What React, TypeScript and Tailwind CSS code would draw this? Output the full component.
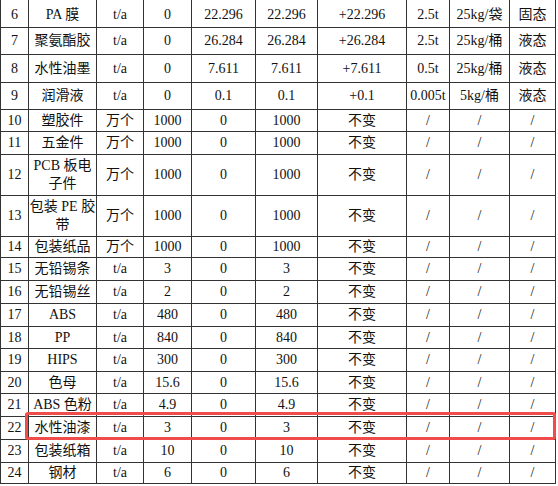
import React from "react";

const rows: { h: string; c: React.ReactNode[] }[] = [
  { h: "h-[28px]", c: ["6", "PA 膜", "t/a", "0", "22.296", "22.296", "+22.296", "2.5t", "25kg/袋", "固态"] },
  { h: "h-[27px]", c: ["7", "聚氨酯胶", "t/a", "0", "26.284", "26.284", "+26.284", "2.5t", "25kg/桶", "液态"] },
  { h: "h-[28px]", c: ["8", "水性油墨", "t/a", "0", "7.611", "7.611", "+7.611", "0.5t", "25kg/桶", "液态"] },
  { h: "h-[27px]", c: ["9", "润滑液", "t/a", "0", "0.1", "0.1", "+0.1", "0.005t", "5kg/桶", "液态"] },
  { h: "h-[22px]", c: ["10", "塑胶件", "万个", "1000", "0", "1000", "不变", "/", "/", "/"] },
  { h: "h-[23px]", c: ["11", "五金件", "万个", "1000", "0", "1000", "不变", "/", "/", "/"] },
  { h: "h-[41px]", c: ["12", <>PCB 板电<br />子件</>, "万个", "1000", "0", "1000", "不变", "/", "/", "/"] },
  { h: "h-[41px]", c: ["13", <>包装 PE 胶<br />带</>, "万个", "1000", "0", "1000", "不变", "/", "/", "/"] },
  { h: "h-[21px]", c: ["14", "包装纸品", "万个", "1000", "0", "1000", "不变", "/", "/", "/"] },
  { h: "h-[23px]", c: ["15", "无铅锡条", "t/a", "3", "0", "3", "不变", "/", "/", "/"] },
  { h: "h-[23px]", c: ["16", "无铅锡丝", "t/a", "2", "0", "2", "不变", "/", "/", "/"] },
  { h: "h-[23px]", c: ["17", "ABS", "t/a", "480", "0", "480", "不变", "/", "/", "/"] },
  { h: "h-[22px]", c: ["18", "PP", "t/a", "840", "0", "840", "不变", "/", "/", "/"] },
  { h: "h-[23px]", c: ["19", "HIPS", "t/a", "300", "0", "300", "不变", "/", "/", "/"] },
  { h: "h-[22px]", c: ["20", "色母", "t/a", "15.6", "0", "15.6", "不变", "/", "/", "/"] },
  { h: "h-[23px]", c: ["21", "ABS 色粉", "t/a", "4.9", "0", "4.9", "不变", "/", "/", "/"] },
  { h: "h-[23px]", c: ["22", "水性油漆", "t/a", "3", "0", "3", "不变", "/", "/", "/"] },
  { h: "h-[23px]", c: ["23", "包装纸箱", "t/a", "10", "0", "10", "不变", "/", "/", "/"] },
  { h: "h-[21px]", c: ["24", "钢材", "t/a", "6", "0", "6", "不变", "/", "/", "/"] },
];

export default function App() {
  return (
    <div className="w-[558px] h-[486px] bg-white overflow-hidden relative">
      <div
        className="w-[556px] border-l border-[#333333] grid grid-cols-[28px_68px_47px_48px_64px_62px_89px_43px_60px_46px] text-[14px] leading-[18px] text-[#111111]"
        style={{ fontFamily: '"Liberation Serif", "Noto Sans CJK SC", serif' }}
      >
        {rows.map((r, ri) =>
          r.c.map((cell, ci) => (
            <div
              key={`${ri}-${ci}`}
              className={`${r.h} border-r border-b border-[#333333] flex items-center justify-center text-center whitespace-nowrap ${ri === 0 ? "pt-[2px]" : ""}`}
            >
              {cell}
            </div>
          ))
        )}
      </div>
      <div className="absolute left-[25px] top-[412px] w-[531px] h-[28px] border-[3px] border-[#f04c4c] rounded-[3px]" />
    </div>
  );
}
